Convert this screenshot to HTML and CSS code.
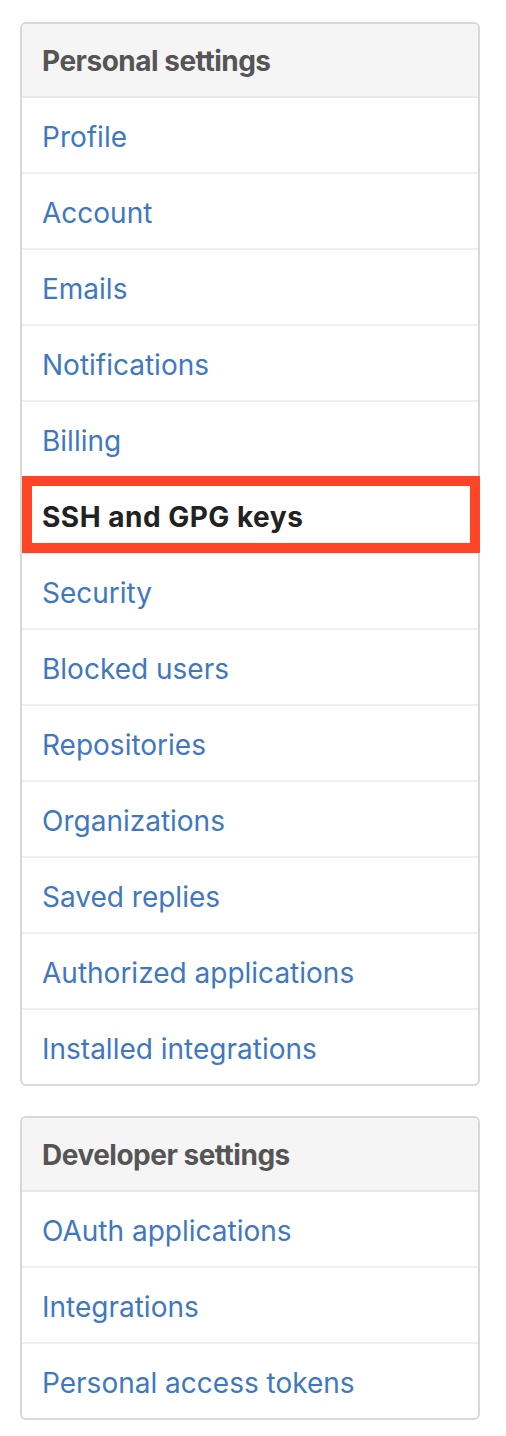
FILE: index.html
```html
<!DOCTYPE html>
<html>
<head>
<meta charset="utf-8">
<link rel="stylesheet" href="styles.css">
</head>
<body>
<div class="sidebar">
  <nav class="menu">
    <h3 class="menu-heading">Personal settings</h3>
    <a class="menu-item" href="#">Profile</a>
    <a class="menu-item" href="#">Account</a>
    <a class="menu-item" href="#">Emails</a>
    <a class="menu-item" href="#">Notifications</a>
    <a class="menu-item" href="#">Billing</a>
    <a class="menu-item selected" href="#">SSH and GPG keys</a>
    <a class="menu-item" href="#">Security</a>
    <a class="menu-item" href="#">Blocked users</a>
    <a class="menu-item" href="#">Repositories</a>
    <a class="menu-item" href="#">Organizations</a>
    <a class="menu-item" href="#">Saved replies</a>
    <a class="menu-item" href="#">Authorized applications</a>
    <a class="menu-item" href="#">Installed integrations</a>
  </nav>
  <nav class="menu">
    <h3 class="menu-heading">Developer settings</h3>
    <a class="menu-item" href="#">OAuth applications</a>
    <a class="menu-item" href="#">Integrations</a>
    <a class="menu-item" href="#">Personal access tokens</a>
  </nav>
</div>
</body>
</html>
```
FILE: styles.css
```css
html, body {
  margin: 0;
  padding: 0;
  background: #fff;
}
body {
  font-family: Inter, "Liberation Sans", sans-serif;
  font-size: 28px;
}
.sidebar {
  width: 460px;
  padding: 22px 0 0 20px;
  display: flex;
  flex-direction: column;
  gap: 30px;
}
.menu {
  display: flex;
  flex-direction: column;
  border: 2px solid #d8d8d8;
  border-radius: 6px;
}
.menu-heading {
  margin: 0;
  padding: 17px 20px 15px;
  line-height: 40px;
  font-size: 28px;
  font-weight: 700;
  letter-spacing: -0.5px;
  color: #555;
  background: #f5f5f5;
  border-bottom: 2px solid #e8e8e8;
  border-radius: 4px 4px 0 0;
}
.menu-item {
  position: relative;
  display: block;
  padding: 18px 20px 14px;
  line-height: 42px;
  color: #4078c0;
  text-decoration: none;
  border-bottom: 2px solid #eeeeee;
}
.menu-item:last-child {
  border-bottom: 0;
}
.menu-item.selected {
  color: #222;
  font-weight: 700;
  letter-spacing: 0.5px;
}
.menu-item.selected::after {
  content: "";
  position: absolute;
  left: 0;
  right: -2px;
  top: -2px;
  bottom: -1px;
  border: 10px solid #ff4526;
}
```
